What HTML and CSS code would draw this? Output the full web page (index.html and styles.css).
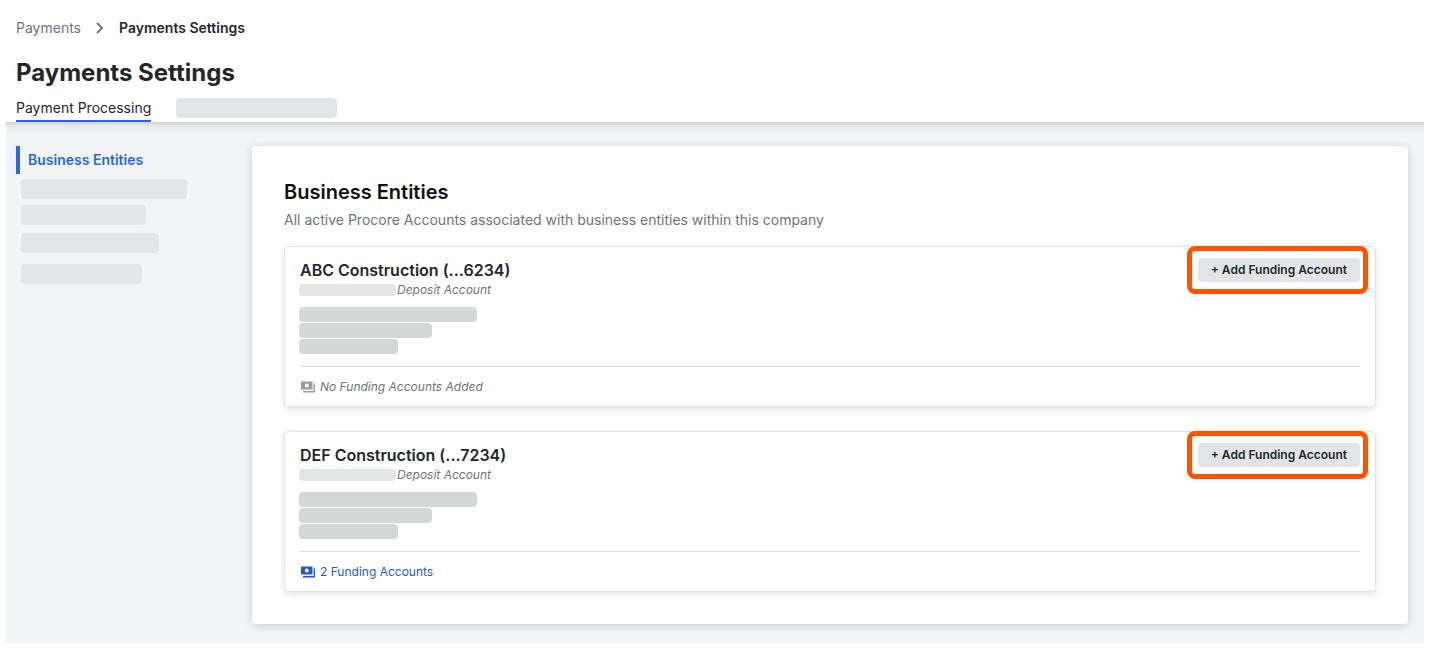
FILE: index.html
```html
<!DOCTYPE html>
<html lang="en">
<head>
  <meta charset="UTF-8">
  <meta name="viewport" content="width=device-width, initial-scale=1">
  <title>Payments Settings</title>
  <link rel="stylesheet" href="styles.css">
</head>
<body>

  <header class="page-header">
    <nav class="breadcrumbs" aria-label="Breadcrumb">
      <a href="#">Payments</a>
      <svg class="chevron" viewBox="0 0 10 14" width="10" height="14" aria-hidden="true">
        <path d="M2 2l5 5-5 5" fill="none" stroke="#6a767c" stroke-width="2"/>
      </svg>
      <span class="current">Payments Settings</span>
    </nav>
    <h1>Payments Settings</h1>
    <nav class="tabs" aria-label="Sections">
      <a class="tab active" href="#">Payment Processing</a>
      <span class="skeleton tab-skeleton"></span>
    </nav>
  </header>

  <div class="page-body">
    <nav class="sidebar" aria-label="Settings">
      <a class="side-link active" href="#">Business Entities</a>
      <span class="skeleton side-one"></span>
      <span class="skeleton side-two"></span>
      <span class="skeleton side-three"></span>
      <span class="skeleton side-four"></span>
    </nav>

    <main class="panel">
      <h2>Business Entities</h2>
      <p class="subtitle">All active Procore Accounts associated with business entities within this company</p>

      <section class="entity">
        <div class="entity-top">
          <div class="entity-info">
            <h3>ABC Construction (...6234)</h3>
            <div class="account-type"><span class="skeleton"></span><em>Deposit Account</em></div>
            <div class="address">
              <span class="skeleton line-one"></span>
              <span class="skeleton line-two"></span>
              <span class="skeleton line-three"></span>
            </div>
          </div>
          <div class="highlight">
            <button type="button" class="add-btn">+ Add Funding Account</button>
          </div>
        </div>
        <div class="entity-footer">
          <svg class="cash" viewBox="0 0 14 12" width="14" height="12" aria-hidden="true">
            <path fill="currentColor" fill-rule="evenodd" d="M0 0.500h11.500v8H0zM5.750 2.500a2 2 0 1 0 0 4a2 2 0 1 0 0-4z"/>
            <path fill="currentColor" d="M12.600 2.500H14v8.900H2V10h10.600z"/>
          </svg>
          <em>No Funding Accounts Added</em>
        </div>
      </section>

      <section class="entity">
        <div class="entity-top">
          <div class="entity-info">
            <h3>DEF Construction (...7234)</h3>
            <div class="account-type"><span class="skeleton"></span><em>Deposit Account</em></div>
            <div class="address">
              <span class="skeleton line-one"></span>
              <span class="skeleton line-two"></span>
              <span class="skeleton line-three"></span>
            </div>
          </div>
          <div class="highlight">
            <button type="button" class="add-btn">+ Add Funding Account</button>
          </div>
        </div>
        <div class="entity-footer linked">
          <svg class="cash" viewBox="0 0 14 12" width="14" height="12" aria-hidden="true">
            <path fill="currentColor" fill-rule="evenodd" d="M0 0.500h11.500v8H0zM5.750 2.500a2 2 0 1 0 0 4a2 2 0 1 0 0-4z"/>
            <path fill="currentColor" d="M12.600 2.500H14v8.900H2V10h10.600z"/>
          </svg>
          <a href="#">2 Funding Accounts</a>
        </div>
      </section>
    </main>
  </div>

</body>
</html>
```

FILE: styles.css
```css
* {
  box-sizing: border-box;
}

body {
  margin: 0;
  padding: 0 6px;
  font-family: Inter, "Liberation Sans", sans-serif;
  font-size: 14px;
  line-height: 20px;
  color: #232729;
  background: #fff;
}

a {
  color: inherit;
  text-decoration: none;
}

h1,
h2,
h3,
p {
  margin: 0;
}

.skeleton {
  display: block;
  height: 20px;
  border-radius: 4px;
  background: #e3e5e7;
}

/* header */

.page-header {
  padding: 18px 10px 0;
}

.breadcrumbs {
  display: flex;
  align-items: center;
  gap: 14px;
  color: #6a767c;
}

.breadcrumbs .current {
  color: #232729;
  font-weight: 600;
}

h1 {
  margin-top: 19px;
  font-size: 24px;
  line-height: 32px;
  font-weight: 700;
}

.tabs {
  display: flex;
  gap: 25px;
  margin-top: 9px;
}

.tab {
  height: 24px;
}

.tab.active {
  border-bottom: 2px solid #2563eb;
}

.tab-skeleton {
  width: 161px;
}

/* body */

.page-body {
  display: flex;
  align-items: flex-start;
  padding: 24px 16px 19px 10px;
  background: linear-gradient(#d3d5d7, #e6e8e9 4px, #f2f4f6 12px) #f2f4f6;
}

.sidebar {
  flex: 0 0 236px;
}

.side-link {
  display: block;
  padding: 4px 0 4px 8px;
  border-left: 4px solid transparent;
}

.side-link.active {
  border-color: #2b66e0;
  color: #2b66e0;
  font-weight: 600;
}

.sidebar .skeleton {
  margin-left: 5px;
}

.side-one {
  width: 166px;
  margin-top: 5px;
}

.side-two {
  width: 125px;
  margin-top: 6px;
}

.side-three {
  width: 138px;
  margin-top: 8px;
}

.side-four {
  width: 121px;
  margin-top: 11px;
}

.panel {
  flex: 1;
  min-width: 0;
  padding: 32px;
  border-radius: 4px;
  background: #fff;
  box-shadow: 0 2px 10px rgba(0, 0, 0, 0.16);
}

h2 {
  font-size: 20px;
  line-height: 28px;
  font-weight: 600;
  color: #111;
}

.subtitle {
  margin-top: 4px;
  color: #6a767c;
}

.entity {
  margin-top: 24px;
  padding: 11px 15px 9px;
  border: 1px solid #e0e3e5;
  border-radius: 5px;
  box-shadow: 0 2px 6px rgba(0, 0, 0, 0.12);
}

.subtitle + .entity {
  margin-top: 16px;
}

.entity-top {
  display: flex;
  justify-content: space-between;
  align-items: flex-start;
  padding-bottom: 12px;
  border-bottom: 1px solid #d6dadc;
}

h3 {
  font-size: 16px;
  line-height: 24px;
  font-weight: 600;
}

.account-type {
  display: flex;
  align-items: center;
  gap: 1px;
  height: 16px;
  margin-left: -1px;
  font-size: 12px;
  line-height: 16px;
  color: #6a767c;
}

.account-type .skeleton {
  width: 97px;
  height: 12px;
}

.address {
  display: flex;
  flex-direction: column;
  gap: 1px;
  margin: 9px 0 0 -1px;
}

.address .skeleton {
  height: 15px;
  background: #d5d7d7;
}

.line-one {
  width: 178px;
}

.line-two {
  width: 133px;
}

.line-three {
  width: 99px;
}

.add-btn {
  display: block;
  height: 24px;
  padding: 0 13px;
  border: 0;
  border-radius: 4px;
  background: #e1e5e8;
  color: #232729;
  font: inherit;
  font-size: 12px;
  font-weight: 600;
  cursor: pointer;
}

.highlight {
  position: relative;
}

/* callout ring drawn over the card edge */
.highlight::after {
  content: "";
  position: absolute;
  inset: -12px -8px -12px -11px;
  border: 5px solid #ff5200;
  border-radius: 8px;
  pointer-events: none;
}

.entity-footer {
  display: flex;
  align-items: center;
  gap: 5px;
  padding: 10px 0 0 1px;
  font-size: 12px;
  color: #6a767c;
}

.entity-footer .cash {
  color: #919da3;
}

.entity-footer.linked,
.entity-footer.linked .cash {
  color: #2459c9;
}
```
